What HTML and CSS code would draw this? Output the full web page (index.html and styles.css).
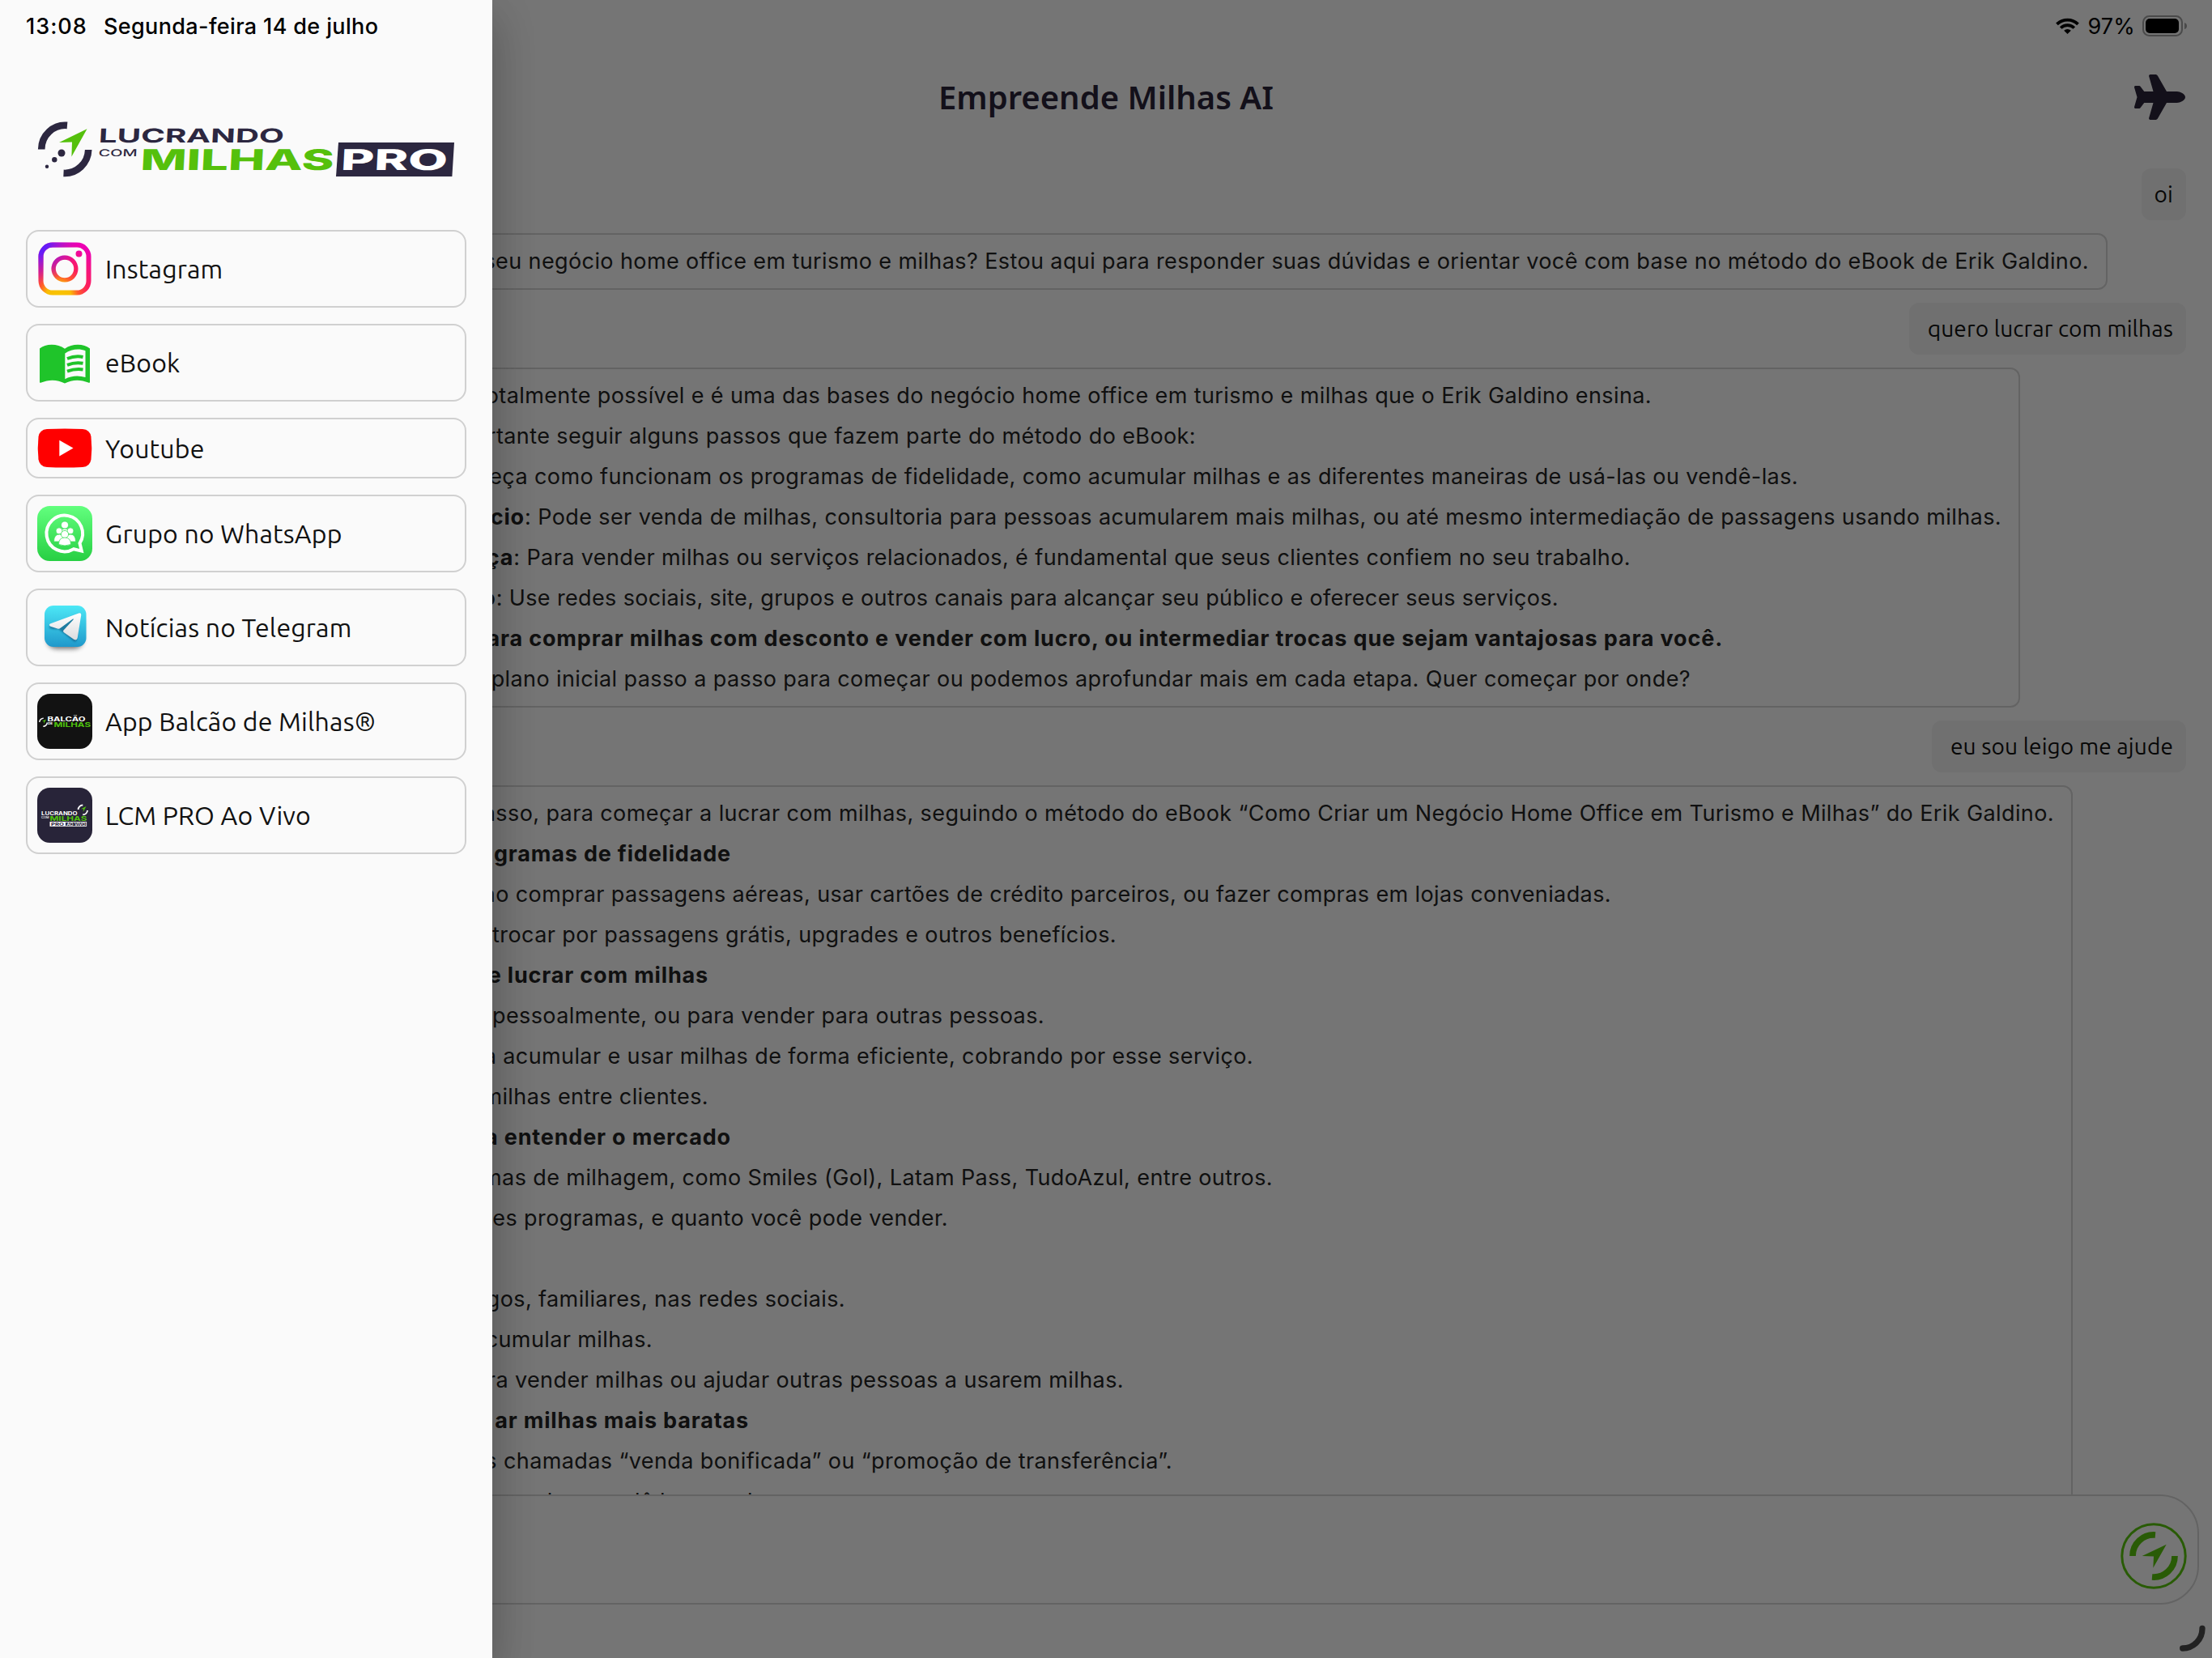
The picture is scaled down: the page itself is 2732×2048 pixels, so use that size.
FILE: index.html
```
<!DOCTYPE html>
<html lang="pt-BR">
<head>
<meta charset="utf-8">
<title>Empreende Milhas AI</title>
<link rel="stylesheet" href="styles.css">
</head>
<body>
<main class="app">
  <header class="app-bar">
    <h1 class="title">Empreende Milhas AI</h1>
    <svg class="plane" viewBox="0 0 576 512"><path d="M482.3 192c34.2 0 93.7 29 93.7 64c0 36-59.5 64-93.7 64l-116.6 0L265.2 495.9c-5.7 10-16.3 16.1-27.8 16.1l-56.2 0c-10.6 0-18.3-10.2-15.4-20.4l49-171.6L112 320 68.8 377.6c-3 4-7.8 6.4-12.8 6.4l-42 0c-7.8 0-14-6.3-14-14c0-1.3 .2-2.6 .5-3.9L32 256 .5 145.9c-.4-1.3-.5-2.6-.5-3.9c0-7.8 6.3-14 14-14l42 0c5 0 9.8 2.4 12.8 6.4L112 192l102.9 0-49-171.6C162.9 10.2 170.6 0 181.2 0l56.2 0c11.5 0 22.1 6.2 27.8 16.1L365.7 192l116.6 0z"/></svg>
  </header>

  <section class="chat">
    <div class="user user-short">oi</div>
    <div class="bot">
      <p style="--end:2580px">seu negócio home office em turismo e milhas? Estou aqui para responder suas dúvidas e orientar você com base no método do eBook de Erik Galdino.</p>
    </div>
    <div class="user">quero lucrar com milhas</div>
    <div class="bot">
      <p style="--end:2040px">otalmente possível e é uma das bases do negócio home office em turismo e milhas que o Erik Galdino ensina.</p>
      <p style="--end:1477px">rtante seguir alguns passos que fazem parte do método do eBook:</p>
      <p style="--end:2221px">eça como funcionam os programas de fidelidade, como acumular milhas e as diferentes maneiras de usá-las ou vendê-las.</p>
      <p style="--end:2472px"><b>cio</b>: Pode ser venda de milhas, consultoria para pessoas acumularem mais milhas, ou até mesmo intermediação de passagens usando milhas.</p>
      <p style="--end:2014px"><b>ça</b>: Para vender milhas ou serviços relacionados, é fundamental que seus clientes confiem no seu trabalho.</p>
      <p class="tight" style="--end:1925px"><b>o</b>: Use redes sociais, site, grupos e outros canais para alcançar seu público e oferecer seus serviços.</p>
      <p style="--end:2128px"><b>ara comprar milhas com desconto e vender com lucro, ou intermediar trocas que sejam vantajosas para você.</b></p>
      <p style="--end:2088px">plano inicial passo a passo para começar ou podemos aprofundar mais em cada etapa. Quer começar por onde?</p>
    </div>
    <div class="user">eu sou leigo me ajude</div>
    <div class="bot">
      <p style="--end:2537px">asso, para começar a lucrar com milhas, seguindo o método do eBook “Como Criar um Negócio Home Office em Turismo e Milhas” do Erik Galdino.</p>
      <p style="--end:903px"><b>gramas de fidelidade</b></p>
      <p style="--end:1990px">ao comprar passagens aéreas, usar cartões de crédito parceiros, ou fazer compras em lojas conveniadas.</p>
      <p style="--end:1379px">trocar por passagens grátis, upgrades e outros benefícios.</p>
      <p style="--end:875px"><b>e lucrar com milhas</b></p>
      <p style="--end:1290px">pessoalmente, ou para vender para outras pessoas.</p>
      <p style="--end:1548px">a acumular e usar milhas de forma eficiente, cobrando por esse serviço.</p>
      <p style="--end:875px">milhas entre clientes.</p>
      <p style="--end:903px"><b>a entender o mercado</b></p>
      <p style="--end:1572px">mas de milhagem, como Smiles (Gol), Latam Pass, TudoAzul, entre outros.</p>
      <p style="--end:1171px">es programas, e quanto você pode vender.</p>
      <p style="--end:903px">&nbsp;</p>
      <p style="--end:1044px">gos, familiares, nas redes sociais.</p>
      <p style="--end:806px">cumular milhas.</p>
      <p style="--end:1388px">ra vender milhas ou ajudar outras pessoas a usarem milhas.</p>
      <p style="--end:925px"><b>ar milhas mais baratas</b></p>
      <p style="--end:1448px">s chamadas “venda bonificada” ou “promoção de transferência”.</p>
      <p style="--end:930px">lo para dê lucro e d</p>
    </div>
  </section>

  <footer class="composer">
    <svg class="send" viewBox="-41 -41 82 82">
      <circle r="39.2" stroke-width="3"/>
      <path d="M-26 0A26 26 0 0 1 2-26M26 0A26 26 0 0 1-2 26" stroke-width="7.7"/>
      <path class="solid" d="M15.7-14.3-14.3 0 0 .5-.7 14.7Z"/>
    </svg>
  </footer>
</main>

<div class="scrim"></div>
<svg class="corner-mark" viewBox="0 0 36 36"><path d="M30 5.3A24.3 24.3 0 0 1 5.7 30"/></svg>

<aside class="drawer">
  <svg class="logo" viewBox="40 140 530 90">
    <g fill="none" stroke="#2c2740" stroke-width="8.6">
      <path d="M51.2 184.5A29.3 29.8 0 0 1 83 154.9M109.2 185A29.3 29.8 0 0 1 78.5 213.9"/>
    </g>
    <g fill="#2c2740"><circle cx="76" cy="189" r="4.5"/><circle cx="67.3" cy="197.3" r="3.2"/><circle cx="58" cy="205.7" r="2.2"/></g>
    <path fill="#55c00c" d="M107.5 159.3 73 176l16-.6-.6 18Z"/>
    <path fill="#2c2740" d="M418 176h143l-2.6 42H415Z"/>
    <g class="wordmark">
      <text transform="translate(121.500 176)skewX(-3)" font-size="23.6" textLength="229" lengthAdjust="spacingAndGlyphs" fill="#2c2740">LUCRANDO</text>
      <text transform="translate(121.500 193.300)skewX(-3)" font-size="12" class="thin" textLength="48" lengthAdjust="spacingAndGlyphs" fill="#2c2740">COM</text>
      <text class="heavy" transform="translate(173 210)skewX(-3)" font-size="35.4" textLength="239" lengthAdjust="spacingAndGlyphs" fill="#55c00c">MILHAS</text>
      <text class="heavy" transform="translate(420.500 210)skewX(-3)" font-size="35.4" textLength="132" lengthAdjust="spacingAndGlyphs" fill="#fff">PRO</text>
    </g>
  </svg>

  <nav class="links">
    <a class="link">
      <svg viewBox="0 0 68 68">
        <defs>
          <radialGradient id="igWarm" cx=".38" cy="1.02" r="1.05"><stop offset="0" stop-color="#f8c400"/><stop offset=".22" stop-color="#f9bd05"/><stop offset=".36" stop-color="#ff5a2c"/><stop offset=".55" stop-color="#fb1f5c"/><stop offset="1" stop-color="#ec00b4"/></radialGradient>
          <radialGradient id="igCool" cx="0" cy=".04" r=".75"><stop offset="0" stop-color="#4f20ff"/><stop offset=".25" stop-color="#6a1cf5"/><stop offset="1" stop-color="#b01cd0" stop-opacity="0"/></radialGradient>
          <path id="igShape" fill-rule="evenodd" d="M19 1.500H49A17.500 17.500 0 0 1 66.500 19V49A17.500 17.500 0 0 1 49 66.500H19A17.500 17.500 0 0 1 1.500 49V19A17.500 17.500 0 0 1 19 1.500ZM19 7.500A11.500 11.500 0 0 0 7.500 19V49A11.500 11.500 0 0 0 19 60.500H49A11.500 11.500 0 0 0 60.500 49V19A11.500 11.500 0 0 0 49 7.500ZM34 17.500A16.500 16.500 0 1 1 34 50.500A16.500 16.500 0 1 1 34 17.500ZM34 22.800A11.200 11.200 0 1 0 34 45.200A11.200 11.200 0 1 0 34 22.800ZM51.500 11.500A4 4 0 1 1 51.500 19.500A4 4 0 1 1 51.500 11.500Z"/>
        </defs>
        <use href="#igShape" fill="url(#igWarm)"/><use href="#igShape" fill="url(#igCool)"/>
      </svg>
      <span>Instagram</span>
    </a>
    <a class="link">
      <svg viewBox="0 0 68 68">
        <path fill="#1fc42a" fill-rule="evenodd" d="M3 16.500C10 10.500 25 10 34 16.800C43 10 58 10.500 65 16.500V57.600Q65 59.500 63 58.600C54 54.500 43 54.500 34 59.500C25 54.500 14 54.500 5 58.600Q3 59.500 3 57.600ZM34.300 22.500V54.300C42 50 51 49.500 59.500 52V19.200C52 16.500 42 17 34.300 22.500Z"/>
        <path fill="none" stroke="#1fc42a" stroke-width="4" d="M37 29Q47 25 56.500 27M37 36.800Q47 33 56.500 34.800M37 44.600Q47 41 56.500 42.400"/>
      </svg>
      <span>eBook</span>
    </a>
    <a class="link">
      <svg class="short" viewBox="0 0 68 47">
        <path fill="red" d="M12 0Q34-1.200 56 0Q65 .5 66.500 9.500Q68 23.500 66.500 37.500Q65 46.500 56 47Q34 48.200 12 47Q3 46.500 1.500 37.500Q0 23.500 1.500 9.500Q3 .5 12 0Z"/>
        <path fill="#fff" d="M27.300 13.700 44.500 23.500 27.300 33.500Z"/>
      </svg>
      <span>Youtube</span>
    </a>
    <a class="link">
      <svg viewBox="0 0 68 68">
        <defs><linearGradient id="wa" x2="0" y2="1"><stop stop-color="#62ff7e"/><stop offset="1" stop-color="#27cf43"/></linearGradient></defs>
        <rect width="68" height="68" rx="15.500" fill="url(#wa)"/>
        <path fill="none" stroke="#fff" stroke-width="4" d="M52.500 46A22.300 22.300 0 1 0 45 53.200L54.800 55.600Z"/>
        <g fill="#fff" stroke="#3fe05c" stroke-width=".8">
          <circle cx="34" cy="23.500" r="4.600"/><path d="M28.500 36q0-8 5.500-8t5.500 8z"/>
          <circle cx="27" cy="30.800" r="4"/><circle cx="41" cy="30.800" r="4"/>
          <path d="M20.500 44q0-9 7-9t6 9zM34.500 44q0-9 6.500-9t6.500 9z"/>
          <circle cx="34" cy="35" r="4.600"/><path d="M26.500 47.500q0-8.500 7.500-8.500t7.500 8.500q-7.500 3-15 0z"/>
        </g>
      </svg>
      <span>Grupo no WhatsApp</span>
    </a>
    <a class="link">
      <svg viewBox="0 0 68 68">
        <defs>
          <linearGradient id="tg" x2="0" y2="1"><stop stop-color="#4ce8f6"/><stop offset="1" stop-color="#1f98cb"/></linearGradient>
          <linearGradient id="tgPlane" x2="0" y2="1"><stop stop-color="#fff"/><stop offset="1" stop-color="#dcdcde"/></linearGradient>
          <filter id="soft" x="-30%" y="-30%" width="160%" height="170%"><feGaussianBlur stdDeviation="3"/></filter>
          <filter id="tight" x="-30%" y="-30%" width="160%" height="170%"><feGaussianBlur stdDeviation="1"/></filter>
        </defs>
        <rect x="13" y="18" width="43" height="42" rx="10" opacity=".6" filter="url(#soft)"/>
        <rect x="9" y="7" width="51.500" height="51" rx="11" fill="url(#tg)"/>
        <path d="M14.500 33 52.500 17 48.500 50.500Q47 52.500 44.500 50.500L32 40.500 26 36Q15 37 14.500 33Z" fill="#0a4f77" opacity=".6" filter="url(#tight)"/>
        <path d="M15 30.500Q14.500 32 17 33L25 35.500Q27 36.200 29 34.500L44 23.500Q45.500 23 44.500 24.500L32.500 37.500Q31.500 39 33 40.300L45.500 49Q49 50.500 49.700 47L54.300 18.500Q54.300 15.500 51 16.500L16.500 29.300Q15.300 29.800 15 30.500Z" fill="url(#tgPlane)"/>
      </svg>
      <span>Notícias no Telegram</span>
    </a>
    <a class="link">
      <svg viewBox="0 0 68 68">
        <rect width="68" height="68" rx="15.500" fill="#121212"/>
        <path fill="none" stroke="#f2f2f2" stroke-width="1.500" d="M2.800 35A4.700 4.700 0 0 1 7.700 30.300M12.200 35.500A4.700 4.700 0 0 1 7.300 40.200"/>
        <path fill="#4fc30d" d="M11 31.500 5.800 34 8.300 34 8 37.300Z"/>
        <g class="wordmark">
          <text x="12.500" y="34.300" font-size="7" textLength="47" lengthAdjust="spacingAndGlyphs" fill="#fff">BALCÃO</text>
          <text x="13" y="38" font-size="3.400" textLength="6" lengthAdjust="spacingAndGlyphs" fill="#fff">DE</text>
          <text x="20.500" y="40.700" font-size="7.600" textLength="45.500" lengthAdjust="spacingAndGlyphs" fill="#4fc30d">MILHAS</text>
        </g>
      </svg>
      <span>App Balcão de Milhas®</span>
    </a>
    <a class="link">
      <svg viewBox="0 0 68 68">
        <rect width="68" height="68" rx="15.500" fill="#282439"/>
        <path fill="none" stroke="#fff" stroke-width="1.900" d="M50.600 27A5.700 5.700 0 0 1 56.300 21.500M62 28A5.700 5.700 0 0 1 56.300 33.300"/>
        <path fill="#4fc30d" d="M60.500 23 54 26.200 57 26.200 56.700 30Z"/>
        <g class="wordmark">
          <text x="5" y="34.300" font-size="5.800" textLength="44.500" lengthAdjust="spacingAndGlyphs" fill="#fff">LUCRANDO</text>
          <text x="5" y="37.800" font-size="3" class="thin" textLength="9.500" lengthAdjust="spacingAndGlyphs" fill="#fff">COM</text>
          <text x="15.400" y="41" font-size="7.600" textLength="46" lengthAdjust="spacingAndGlyphs" fill="#4fc30d">MILHAS</text>
          <rect x="15.500" y="42" width="19" height="5.800" fill="#fff"/>
          <rect x="34.700" y="42.400" width="26" height="5" fill="none" stroke="#fff" stroke-width=".8"/>
          <text x="17" y="46.900" font-size="5.400" textLength="16" lengthAdjust="spacingAndGlyphs" fill="#282439">PRO</text>
          <text x="36.500" y="46.600" font-size="4.600" class="thin" textLength="23" lengthAdjust="spacingAndGlyphs" fill="#fff">AO VIVO</text>
        </g>
      </svg>
      <span>LCM PRO Ao Vivo</span>
    </a>
  </nav>
</aside>

<div class="status">
  <span class="time">13:08</span>
  <span class="date">Segunda-feira 14 de julho</span>
  <svg class="wifi" viewBox="0 0 29 20"><g fill="none" stroke="#000" stroke-width="3.800"><path d="M1.500 7.900A18.500 18.500 0 0 1 27.500 7.900M6.200 12.500A12 12 0 0 1 22.800 12.500"/></g><path d="M14.500 20 10.200 15.800A6.200 6.200 0 0 1 18.800 15.800Z"/></svg>
  <span class="percent">97%</span>
  <svg class="battery" viewBox="0 0 56 26"><rect x="1" y="1" width="48" height="24" rx="7.500" fill="none" stroke="#4a4a4a" stroke-width="2"/><rect x="4" y="4" width="41" height="18" rx="5"/><path fill="#4a4a4a" d="M52 9Q55 10 55 13T52 17Z"/></svg>
</div>
</body>
</html>
```
FILE: styles.css
```
* { box-sizing: border-box; }
body {
  margin: 0;
  width: 2732px;
  height: 2048px;
  overflow: hidden;
  background: #fff;
  font-family: Inter, "Liberation Sans", sans-serif;
}
.app {
  height: 2048px;
  display: flex;
  flex-direction: column;
  padding: 48px 16px 66px;
}
.app-bar {
  height: 144px;
  flex: none;
  display: grid;
  grid-template-columns: 64px 1fr 64px;
  align-items: center;
  padding: 0 16px;
}
.title {
  grid-column: 2;
  margin: 0;
  text-align: center;
  font: 600 40px/56px "Noto Sans", sans-serif;
  color: #2a2439;
}
.plane { width: 63px; height: 56px; fill: #2a2439; }
.chat {
  flex: 1;
  min-height: 0;
  overflow: hidden;
  display: flex;
  flex-direction: column;
  align-items: flex-start;
  gap: 16px;
  padding: 16px 16px 0;
}
.user {
  flex: none;
  align-self: flex-end;
  height: 64px;
  padding: 0 16px 0 23px;
  border-radius: 12px;
  background: #f3f3f3;
  color: #111;
  font: 28px/64px Ubuntu, "Noto Sans", sans-serif;
  letter-spacing: .13px;
}
.user-short { padding-left: 16px; }
.bot {
  flex: none;
  padding: 8px 21px 8px 20px;
  border: 2px solid #d8d8d8;
  border-radius: 12px;
  color: #242424;
  font-size: 27px;
  line-height: 50px;
  letter-spacing: .4px;
}
.bot p {
  margin: 0;
  width: calc(var(--end) - 54px);
  height: 50px;
  display: flex;
  justify-content: flex-end;
  white-space: pre;
}
.bot .tight { letter-spacing: .36px; }
.bot b { font-weight: 700; letter-spacing: .83px; }
.composer {
  flex: none;
  height: 136px;
  display: flex;
  align-items: center;
  justify-content: flex-end;
  padding: 16px 13px 0 0;
  border: 2px solid #d8d8d8;
  border-radius: 48px;
}
.send { width: 82px; height: 82px; fill: none; stroke: #5bc70f; }
.send .solid { fill: #5bc70f; stroke: none; }
.scrim {
  position: absolute;
  inset: 0;
  height: 2048px;
  background: rgba(0, 0, 0, .54);
}
.corner-mark {
  position: absolute;
  left: 2690px;
  top: 2006px;
  width: 36px;
  height: 36px;
  fill: none;
  stroke: #222;
  stroke-width: 7.3;
  stroke-linecap: round;
}
.drawer {
  position: absolute;
  left: 0;
  top: 0;
  width: 608px;
  height: 2048px;
  padding: 140px 32px 0;
  background: #fafafa;
  box-shadow: 0 32px 48px 0 rgba(0, 0, 0, .16), 0 12px 56px 0 rgba(0, 0, 0, .12);
}
.logo { display: block; width: 530px; height: 90px; margin: 0 0 54px 8px; }
.wordmark { font-family: Inter, sans-serif; font-weight: 700; }
.wordmark .thin { font-weight: 500; }
.wordmark .heavy { font-weight: 800; }
.links { display: flex; flex-direction: column; gap: 20px; }
.link {
  display: flex;
  align-items: center;
  gap: 16px;
  padding: 12px;
  border: 2px solid #d0d0d0;
  border-radius: 16px;
  color: #111;
  font: 32px/38px Ubuntu, "Noto Sans", sans-serif;
  letter-spacing: .17px;
}
.link svg { display: block; width: 68px; height: 68px; overflow: visible; letter-spacing: 0; }
.link svg.short { height: 47px; }
.status {
  position: absolute;
  left: 0;
  top: 0;
  width: 2732px;
  height: 64px;
  display: flex;
  align-items: center;
  padding: 0 30px 0 32px;
  font-size: 27px;
  line-height: 65px;
  color: #000;
}
.time { width: 96px; font-weight: 500; letter-spacing: 1px; }
.date { flex: 1; font-weight: 500; letter-spacing: .36px; }
.wifi { width: 29px; height: 20px; }
.percent { margin: 0 9px 0 10px; letter-spacing: .2px; }
.battery { width: 56px; height: 26px; }
```
